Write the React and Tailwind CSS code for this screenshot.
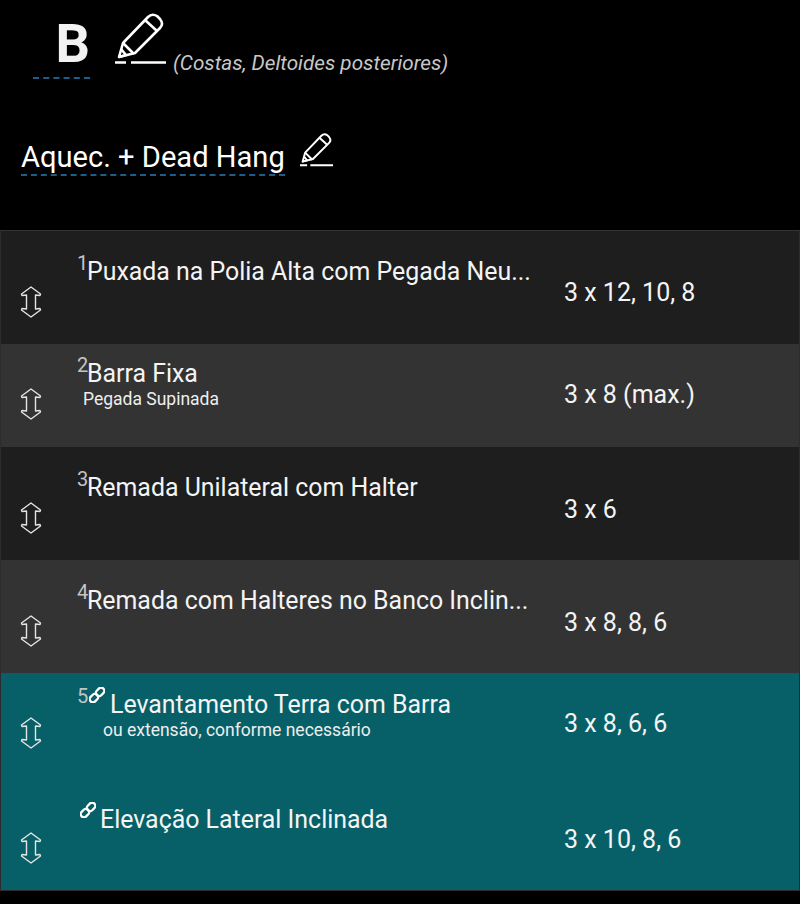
const exercises = [
  { n: '1', name: 'Puxada na Polia Alta com Pegada Neu...', reps: '3 x 12, 10, 8', h: 'h-[113px]', bg: 'bg-[#1e1e1e]', namePt: 'pt-[21px]', repsPt: 'pt-[48px]', iconPt: 'pt-[55px]' },
  { n: '2', name: 'Barra Fixa', note: 'Pegada Supinada', reps: '3 x 8 (max.)', h: 'h-[103px]', bg: 'bg-[#333333]', namePt: 'pt-[10px]', repsPt: 'pt-[37px]', iconPt: 'pt-[44px]', noteMl: 'ml-[6px]' },
  { n: '3', name: 'Remada Unilateral com Halter', reps: '3 x 6', h: 'h-[113px]', bg: 'bg-[#1e1e1e]', namePt: 'pt-[21px]', repsPt: 'pt-[49px]', iconPt: 'pt-[55px]' },
  { n: '4', name: 'Remada com Halteres no Banco Inclin...', reps: '3 x 8, 8, 6', h: 'h-[113px]', bg: 'bg-[#333333]', namePt: 'pt-[21px]', repsPt: 'pt-[49px]', iconPt: 'pt-[55px]' },
  { n: '5', link: true, name: 'Levantamento Terra com Barra', note: 'ou extensão, conforme necessário', reps: '3 x 8, 6, 6', h: 'h-[104px]', bg: 'bg-[#076068]', namePt: 'pt-[12px]', repsPt: 'pt-[37px]', iconPt: 'pt-[44px]', noteMl: 'ml-[26px]', linkMl: 'ml-[2px]', nameMl: 'ml-[5px]' },
  { link: true, name: 'Elevação Lateral Inclinada', reps: '3 x 10, 8, 6', h: 'h-[113px]', bg: 'bg-[#076068]', namePt: 'pt-[23px]', repsPt: 'pt-[49px]', iconPt: 'pt-[55px]', linkMl: 'ml-[3px]', nameMl: 'ml-[4px]' },
];

function PencilLine({ className, weight }) {
  return (
    <svg viewBox="0 0 51 52" fill="none" stroke="currentColor" strokeWidth={weight} strokeLinejoin="round" className={className}>
      <path d="M4 44 L8 30 L33 4 Q37 0 42 3 L45 6 Q49 11 45 15 L20 40 Z" />
      <path d="M8 30 L19 41 M30 7 L42 18 M4 44 L11 42 L6 36" />
      <path d="M0 49.5 H11 M16 49.5 H51" />
    </svg>
  );
}

function MoveArrows() {
  return (
    <svg viewBox="0 0 22 32" fill="none" stroke="currentColor" strokeWidth="1.4" strokeLinejoin="round" className="w-[22px] h-[32px] text-[#e4e4e4]">
      <path d="M11 1 L20.5 8 L20 9.5 L15.5 9 V23 L20 22.5 L20.5 24 L11 31 L1.5 24 L2 22.5 L6.5 23 V9 L2 9.5 L1.5 8 Z" />
    </svg>
  );
}

function ChainLink({ className }) {
  return (
    <svg viewBox="0 0 16 16" fill="none" stroke="currentColor" strokeWidth="2.3" className={className}>
      <g transform="rotate(-45 8 8)">
        <rect x="-1" y="4.8" width="9.4" height="6.4" rx="3.2" />
        <rect x="7.6" y="4.8" width="9.4" height="6.4" rx="3.2" />
      </g>
    </svg>
  );
}

function Row({ item }) {
  return (
    <div className={`flex ${item.h} ${item.bg}`}>
      <div className={`w-[76px] shrink-0 pl-[19px] ${item.iconPt}`}>
        <MoveArrows />
      </div>
      <div className={`w-[487px] shrink-0 ${item.namePt}`}>
        <div className="flex items-start text-[#f4f4f4]">
          {item.n && <span className="text-[20px] leading-[22px] text-[#c4c4c4] w-[10px]">{item.n}</span>}
          {item.link && <ChainLink className={`w-[16px] h-[16px] text-white mt-[2px] ${item.linkMl}`} />}
          <span className={`text-[24.9px] leading-[28px] mt-[6px] whitespace-nowrap ${item.nameMl || ''}`}>{item.name}</span>
        </div>
        {item.note && <p className={`text-[17.5px] leading-[18px] mt-[2px] text-[#eeeeee] ${item.noteMl}`}>{item.note}</p>}
      </div>
      <div className="text-[25px] leading-[28px] text-[#f4f4f4] whitespace-nowrap">
        <div className={item.repsPt}>{item.reps}</div>
      </div>
    </div>
  );
}

export default function App() {
  return (
    <div className="min-h-[904px] bg-black font-['Roboto',sans-serif] text-white">
      <div className="flex items-start h-[120px]">
        <div className="ml-[33px] mt-[16px] w-[57px] h-[63px] border-b-2 border-dashed border-[#1d5f8a] text-right text-[54px] leading-[56px] font-bold text-[#f2f2f2]">B</div>
        <PencilLine className="ml-[25px] mt-[13px] w-[51px] h-[52px]" weight={2.6} />
        <span className="ml-[7px] mt-[51px] text-[20.7px] leading-[24px] italic text-[#c8c8c8] whitespace-nowrap">(Costas, Deltoides posteriores)</span>
      </div>
      <div className="flex items-start h-[110px]">
        <div className="ml-[21px] mt-[20px] h-[36px] border-b-2 border-dashed border-[#1d5f8a] text-[29.1px] leading-[34px] whitespace-nowrap">Aquec. + Dead Hang</div>
        <PencilLine className="ml-[15px] mt-[13px] w-[33px] h-[34px]" weight={3} />
      </div>
      <div className="border border-[#2c2c2c] border-t-[#333333]">
        {exercises.map((item, i) => (
          <Row key={i} item={item} />
        ))}
      </div>
    </div>
  );
}
